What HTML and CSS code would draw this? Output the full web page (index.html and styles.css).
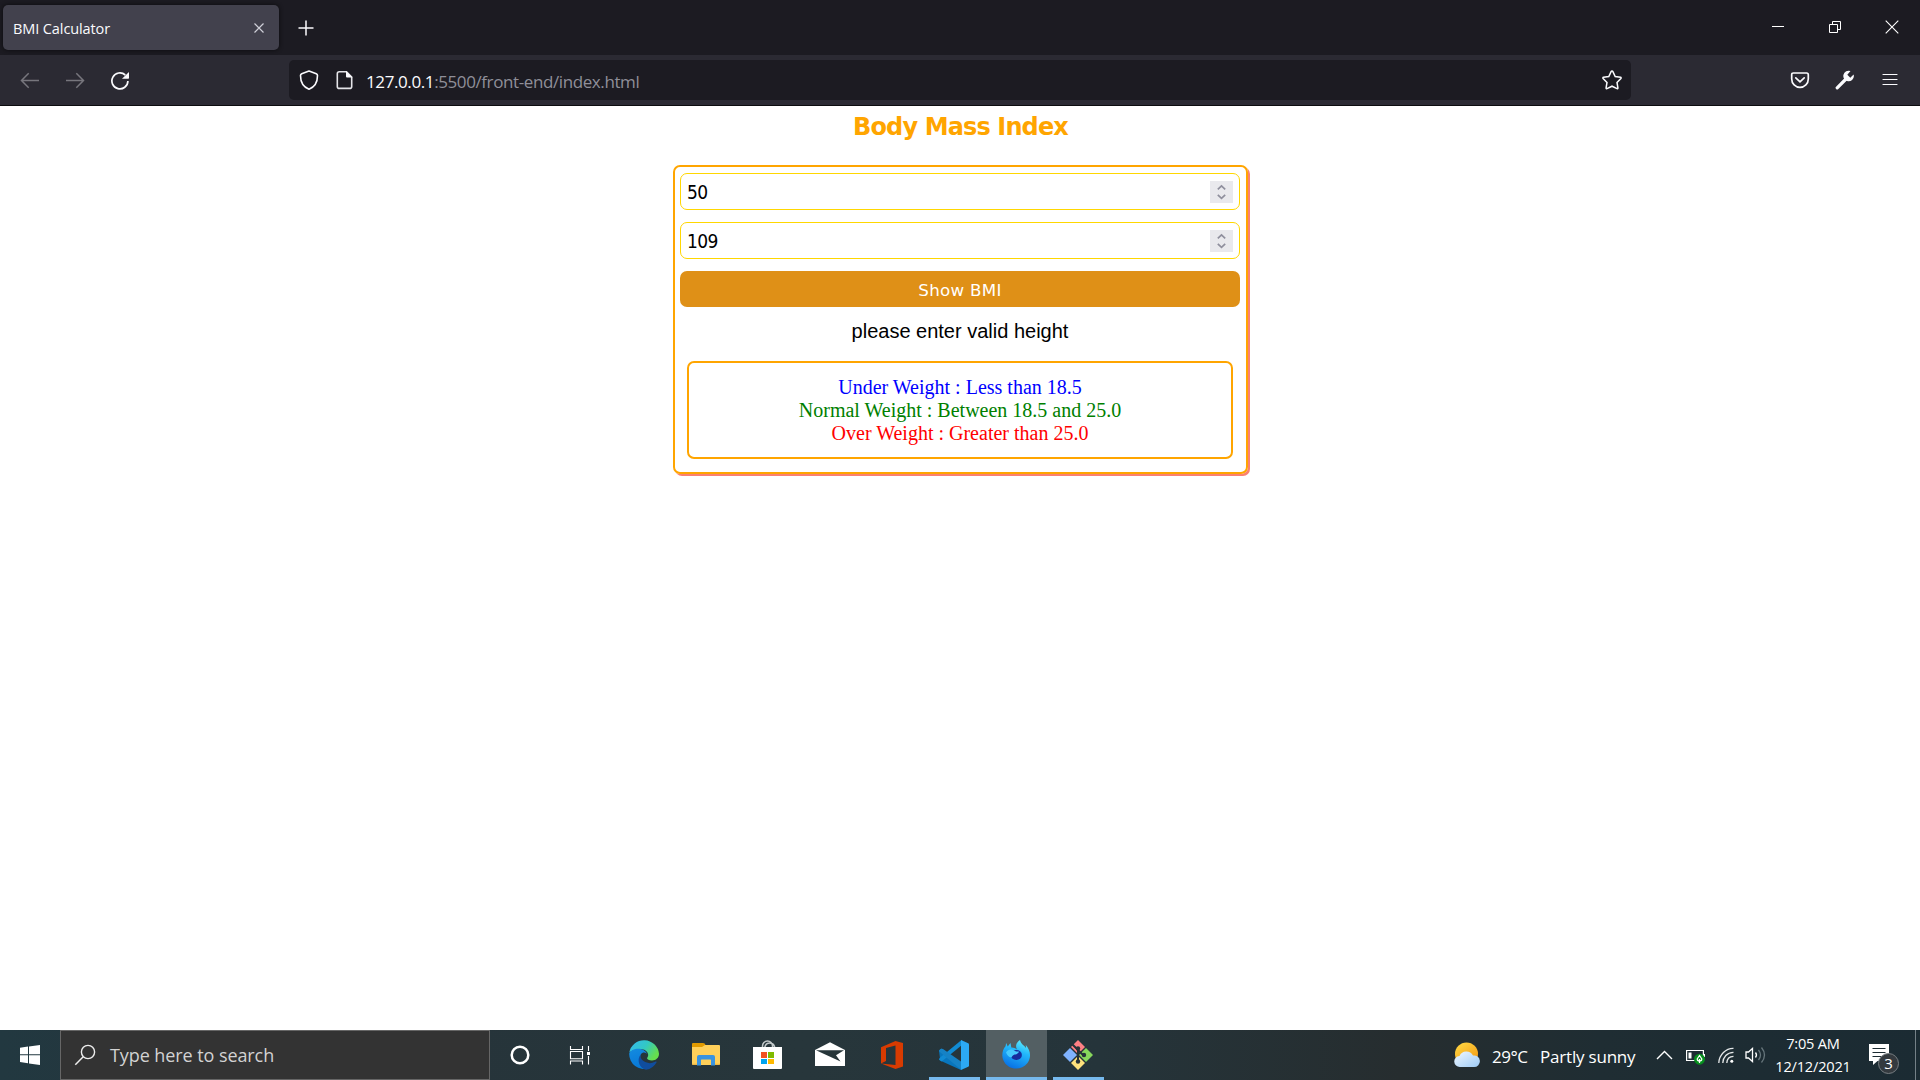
FILE: index.html
```html
<!DOCTYPE html>
<html lang="en">
<head>
<meta charset="utf-8">
<title>BMI Calculator</title>
<link rel="stylesheet" href="styles.css">
</head>
<body>
<div class="screen">
  <header class="tabbar">
    <div class="tab">
      <span class="tab-title">BMI Calculator</span>
      <svg class="tab-close" width="12" height="12" viewBox="0 0 12 12"><path d="M1.5 1.5l9 9M10.5 1.5l-9 9" stroke="#cfcfd8" stroke-width="1.2"/></svg>
    </div>
    <svg class="new-tab" width="16" height="16" viewBox="0 0 16 16"><path d="M8 .5v15M.5 8h15" stroke="#fbfbfe" stroke-width="1.5"/></svg>
    <div class="window-buttons">
      <svg width="14" height="14" viewBox="0 0 14 14"><path d="M1 6.5h12" stroke="#fff"/></svg>
      <svg width="14" height="14" viewBox="0 0 14 14" fill="none" stroke="#fff"><path d="M1.500 4.500h8v8h-8zM4.500 4.500v-3h8v8h-3"/></svg>
      <svg width="14" height="14" viewBox="0 0 14 14"><path d="M.7.7l12.600 12.600M13.300.7L.7 13.300" stroke="#fff" stroke-width="1.100"/></svg>
    </div>
  </header>

  <nav class="toolbar">
    <svg class="tool back" width="20" height="20" viewBox="0 0 20 20" fill="none" stroke="#77767d" stroke-width="1.500"><path d="M19 10.500H1.600M8.700 3.300L1.500 10.500l7.200 7.200"/></svg>
    <svg class="tool forward" width="20" height="20" viewBox="0 0 20 20" fill="none" stroke="#77767d" stroke-width="1.500"><path d="M1 10.500h17.400M11.300 3.300l7.200 7.200-7.200 7.200"/></svg>
    <svg class="tool" width="20" height="20" viewBox="0 0 20 20"><path d="M17.900 11A8 8 0 1 1 15.300 5" fill="none" stroke="#fbfbfe" stroke-width="1.700"/><path d="M19 2v6q0 .7-.7.7H12z" fill="#fbfbfe"/></svg>
    <div class="urlbar">
      <svg class="shield" width="20" height="22" viewBox="0 0 20 22"><path d="M10 2l7.300 2.700q1.200.5 1.200 1.800C18.500 13 15.700 18 10 20.200 4.300 18 1.500 13 1.500 6.500q0-1.300 1.200-1.800z" fill="none" stroke="#fbfbfe" stroke-width="1.600" stroke-linejoin="round"/></svg>
      <svg class="page" width="17" height="20" viewBox="0 0 17 20"><path d="M3.300 1.800h7.200l5.200 5.200v9.400q0 2-2 2H3.300q-2 0-2-2V3.800q0-2 2-2z" fill="none" stroke="#e4e4e8" stroke-width="1.600"/><path d="M10 1l6.500 6.500H11q-1 0-1-1z" fill="#fbfbfe"/></svg>
      <span class="url"><b>127.0.0.1</b>:5500/front-end/index.html</span>
      <svg class="star" width="22" height="22" viewBox="0 0 22 22"><path d="M11 2q.6 0 .9.600l2.300 5 5.300.700q1 .300.400 1.200l-3.900 3.900.9 5.500q0 1-.9.700L11 17.200l-5 2.400q-.9.300-.9-.7l.9-5.500-3.900-3.900q-.6-.9.400-1.200l5.300-.7 2.300-5q.3-.6.9-.6z" fill="none" stroke="#fbfbfe" stroke-width="1.500"/></svg>
    </div>
    <div class="tools-right">
      <svg width="20" height="20" viewBox="0 0 20 20" fill="none" stroke="#fbfbfe" stroke-width="1.700"><path d="M3.400 3h13.200q1.700 0 1.700 1.700V9a8.300 8.300 0 0 1-16.600 0V4.700Q1.700 3 3.400 3z"/><path d="M5.800 7.800L10 11.800l4.200-4" stroke-linecap="round"/></svg>
      <svg width="20" height="20" viewBox="0 0 20 20"><path d="M2.200 17.800L11 9" stroke="#fbfbfe" stroke-width="3.200" stroke-linecap="round"/><path d="M15.500 1.100a5.300 5.300 0 1 0 3.400 5l-.3-1.600-3.300 3.200-3-3z" fill="#fbfbfe"/></svg>
      <svg width="20" height="20" viewBox="0 0 20 20"><path d="M3 4.500h14M3 9.500h14M3 14.500h14" stroke="#fbfbfe" stroke-width="1.200" stroke-linecap="round"/></svg>
    </div>
  </nav>

  <main class="content">
    <h1 class="heading">Body Mass Index</h1>
    <section class="card">
      <div class="field"><span>50</span>
        <svg class="spinner" width="23" height="22" viewBox="0 0 23 22"><path fill="#e9e9ed" d="M0 0h23v22H0z"/><path d="M7.800 8.300L11.500 4.800l3.700 3.500M7.800 13.900l3.700 3.500 3.700-3.500" fill="none" stroke="#8f8f9d" stroke-width="1.700"/></svg>
      </div>
      <div class="field"><span>109</span>
        <svg class="spinner" width="23" height="22" viewBox="0 0 23 22"><path fill="#e9e9ed" d="M0 0h23v22H0z"/><path d="M7.800 8.300L11.500 4.800l3.700 3.500M7.800 13.900l3.700 3.500 3.700-3.500" fill="none" stroke="#8f8f9d" stroke-width="1.700"/></svg>
      </div>
      <button class="show">Show BMI</button>
      <p class="message">please enter valid height</p>
      <div class="legend">
        <div class="under">Under Weight : Less than 18.5</div>
        <div class="normal">Normal Weight : Between 18.5 and 25.0</div>
        <div class="over">Over Weight : Greater than 25.0</div>
      </div>
    </section>
  </main>

  <footer class="taskbar">
    <div class="start"><svg width="20" height="20" viewBox="0 0 20 20"><path d="M0 2.700L8 1.600v7.700H0zM9 1.500L20 0v9.300H9zM0 10.300h8v7.900L0 17.100zM9 10.300h11V20L9 18.400z" fill="#fff"/></svg></div>
    <div class="search">
      <svg width="22" height="22" viewBox="0 0 22 22"><circle cx="14" cy="8" r="6.600" fill="none" stroke="#eee" stroke-width="1.400"/><path d="M9.200 12.700L1.300 20.700" stroke="#eee" stroke-width="1.500"/></svg>
      <span class="search-text">Type here to search</span>
    </div>
    <div class="slot narrow"><svg width="22" height="22" viewBox="0 0 22 22"><circle cx="11" cy="11" r="8.300" fill="none" stroke="#fff" stroke-width="2.500"/></svg></div>
    <div class="slot narrow last"><svg width="22" height="22" viewBox="0 0 22 22" fill="none" stroke="#fff" stroke-width="1.100"><path d="M1.500 2v3.500h12V2M1.500 20.500V17h12v3.500M1.500 7.500h12v7.300h-12zM19.500 2v5M19.500 12v8.500"/><path d="M18 8h3v3h-3z" fill="#fff" stroke="none"/></svg></div>
    <div class="slot"><svg width="30" height="30" viewBox="0 0 30 30">
      <defs><linearGradient id="e1" x1="0" y1="0" x2="1" y2=".5"><stop offset="0" stop-color="#35b8f1"/><stop offset=".55" stop-color="#32c8c4"/><stop offset="1" stop-color="#66df4d"/></linearGradient><linearGradient id="e2" x1="0" y1="0" x2=".3" y2="1"><stop offset="0" stop-color="#148be0"/><stop offset="1" stop-color="#0878d6"/></linearGradient></defs>
      <path d="M.3 12.500A15 15 0 0 1 30 13.700c0 4-3 6.700-7 6.700-3.700 0-5.800-1.400-4.600-2.900 2.300-3.300-.7-8-5.700-8.200C7.500 8.800 3 10.500.3 12.500z" fill="url(#e1)"/>
      <path d="M.2 13.500C1.500 9.500 8 7.800 12.500 9.200c3.500 1.200 5.300 3.300 5.600 5-.8-2-4.600-2.800-6.300.3-2.500 5.500 2 12.500 8 13.800A15 15 0 0 1 .2 13.500z" fill="url(#e2)"/>
      <path d="M11.700 14.600c-1.500 5.400 5.700 9.800 11.800 8.200 2.500-.7 4.400-1.900 4.100-.6A15 15 0 0 1 17 29.800c-6-.6-10-9.700-5.300-15.200z" fill="#104d9e"/></svg></div>
    <div class="slot"><svg width="30" height="30" viewBox="0 0 30 30"><path d="M1 4q0-1 1-1h10q2 0 2.500 2v6H1z" fill="#e19a00"/><path d="M1 7h10l3-2h14q1 0 1 1v18q0 1-1 1H2q-1 0-1-1z" fill="#ffd05a"/><path d="M6 25.500V17q0-2 2-2h14q2 0 2 2v8.500h-4V20q0-.5-.5-.5h-9q-.5 0-.5.5v5.500z" fill="#3993e0"/><path d="M1 24.300h28" stroke="#e2a83a" stroke-width=".8" stroke-dasharray="5 18 6"/></svg></div>
    <div class="slot"><svg width="30" height="30" viewBox="0 0 30 30"><path d="M9.500 8V6a5 5 0 0 1 10 0v2M12 8V6.500a5 5 0 0 1 9.500 0V8" fill="none" stroke="#c3c9ca" stroke-width="1.500"/><path d="M0 7h29v21q0 1-1 1H1q-1 0-1-1z" fill="#fff"/><path d="M8 12h6v6H8z" fill="#f25022"/><path d="M15 12h6v6h-6z" fill="#7fba00"/><path d="M8 19h6v5H8z" fill="#00a4ef"/><path d="M15 19h6v5h-6z" fill="#ffb900"/></svg></div>
    <div class="slot"><svg width="30" height="30" viewBox="0 0 30 30"><path d="M0 10L15 2.300 30 10v16H0z" fill="#fff"/><path d="M1 10.200h28l-8 5 4.500 6.300L1 10.200z" fill="#263539"/></svg></div>
    <div class="slot"><svg width="30" height="30" viewBox="0 0 30 30"><path d="M4 7.200L18.500 1 26 3v23.500L18.500 29 4 23.500 18.500 25V5.600L9 8v13l-5 2.500z" fill="#d83b01"/></svg></div>
    <div class="slot running"><svg width="30" height="30" viewBox="0 0 30 30"><path d="M0 10.500l2.700-2 20 17.500-.7 4L1 20.500q-1.300-1 0-2z" fill="#0876bd"/><path d="M0 19.500l2.700 2L23 5l-.5-5L.6 18z" fill="#118bd3"/><path d="M2.500 8.700q-1 0-2 1.300-.6 1 .4 2L22 29.800V21.500L4 9z" fill="#1682c5"/><path d="M22 0l7.200 3.300q.8.400.8 1.500v20.400q0 1.100-.8 1.500L22 30z" fill="#2ca9f4"/></svg></div>
    <div class="slot active"><svg width="30" height="30" viewBox="0 0 30 30">
      <defs><linearGradient id="f1" x1=".8" y1="0" x2=".4" y2="1"><stop offset="0" stop-color="#66f0fa"/><stop offset=".4" stop-color="#24b9fb"/><stop offset="1" stop-color="#0872e6"/></linearGradient></defs>
      <circle cx="15" cy="15.500" r="13.300" fill="#535f63"/>
      <path d="M1.300 15.500c0-4 1.200-7 3.200-9.300L5.200 3l1.500 3.500L9.500 3l.8 4.500c3 .2 5 1 6 2.500C13.700 6.500 15.500 2 19 0c.8 4 4 5 6 8l-.2-3C30 10.500 30.200 18 26.500 23 20 31.500 6.500 30 2.500 20.500Q1.300 18 1.300 15.500z" fill="url(#f1)"/>
      <ellipse cx="15.300" cy="15" rx="5.600" ry="5" fill="#172d9e"/><path d="M5 12.500c2-3.500 6-3.800 9-1.500 1.500.8 2.800.6 4 .5-.5 2-2.500 2.800-4.500 3-2 .7-2.500 2.500-3.300 3-2.200 0-4-2.200-5.200-5z" fill="#47caff"/></svg></div>
    <div class="slot running"><svg width="30" height="30" viewBox="0 0 30 30"><path d="M15 0l7 7-7 7-7-7z" fill="#ff8084"/><path d="M7 8l7 7-7 7-7-7z" fill="#80b3ff"/><path d="M23 8l7 7-7 7-7-7z" fill="#87d65c"/><path d="M15 16l7 7-7 7-7-7z" fill="#ffe27d"/><path d="M9 4l6 6v13M15 10l6 6" fill="none" stroke="#263238" stroke-width="2"/><circle cx="15" cy="8.500" r="2.200" fill="#263238"/><circle cx="15" cy="21.500" r="2.200" fill="#263238"/><circle cx="21" cy="15" r="2.200" fill="#263238"/></svg></div>

    <div class="tray">
      <svg class="weather" width="26" height="26" viewBox="0 0 26 26"><defs><linearGradient id="s" x2=".7" y2="1"><stop stop-color="#ffda45"/><stop offset="1" stop-color="#f49a14"/></linearGradient><linearGradient id="c" x2="1" y2="1"><stop stop-color="#f1f8ff"/><stop offset="1" stop-color="#9dcbf6"/></linearGradient></defs><circle cx="12.500" cy="12" r="11.500" fill="url(#s)"/><path d="M6 25a5.500 5.500 0 0 1-.5-11A7.500 7.500 0 0 1 19 13.500 5.800 5.800 0 1 1 20 25z" fill="url(#c)"/></svg>
      <span class="temp">29°C</span><span class="sky">Partly sunny</span>
      <svg class="chevron" width="17" height="12" viewBox="0 0 17 12"><path d="M1 10l7.500-7.500L16 10" fill="none" stroke="#fff" stroke-width="1.400"/></svg>
      <svg class="battery" width="20" height="20" viewBox="0 0 20 20"><path d="M.6 5.500h16.800v10H.6z" fill="none" stroke="#fff" stroke-width="1.200"/><path d="M2.500 7.500h3v6h-3zM17.500 9H19v3h-1.500z" fill="#fff"/><circle cx="13.500" cy="14.200" r="5.500" fill="#078f1e"/><path d="M13.500 10.500l2.300 3.500q0 2-2.300 2t-2.300-2zM13.500 14v4" fill="none" stroke="#fff" stroke-width="1.200"/></svg>
      <svg class="wifi" width="17" height="17" viewBox="0 0 17 17" fill="none" stroke="#e4e7e8" stroke-width="1.300"><path d="M.8 16C1 8 8 1 15.500 1.300M4.800 16C5 10 9 5.500 15.500 5.300M8.800 16c.2-4 2.700-6.700 6.700-6.700"/><circle cx="13.800" cy="14.300" r="1.500" fill="#fff" stroke="none"/></svg>
      <svg class="sound" width="21" height="20" viewBox="0 0 21 20" fill="none" stroke="#fff" stroke-width="1.300"><path d="M1 7h2.500L7.500 3.500v13L3.500 13H1z"/><path d="M10.500 7.500q2 2.500 0 5"/><path d="M13.500 5q4 5 0 10M16.500 2.500q6 7.500 0 15" stroke="#66757b"/></svg>
      <div class="clock"><span>7:05 AM</span><span class="date">12/12/2021</span></div>
      <svg class="notice" width="30" height="32" viewBox="0 0 30 32"><path d="M0 1h20v17H8.500L4 22v-4H0z" fill="#fff"/><path d="M3.500 5.500h13M3.500 9.500h13M3.500 13.500h9" stroke="#1c2b32"/><circle cx="19.500" cy="20.500" r="10" fill="#343a3f" stroke="#777e82"/><text x="19.500" y="26" class="badge">3</text></svg>
      <i class="desktop-edge"></i>
    </div>
  </footer>
</div>
</body>
</html>
```
FILE: styles.css
```css
* { box-sizing: border-box; }
body { margin: 0; background: #fff; font-family: "Open Sans", sans-serif; }
svg { display: block; flex: none; }
.screen { width: 1920px; height: 1080px; display: flex; flex-direction: column; overflow: hidden; }

.tabbar { height: 55px; background: #1c1b22; display: flex; align-items: center; flex: none; }
.tab { width: 276px; height: 45px; margin-left: 3px; padding: 0 14px 0 10px; display: flex; align-items: center; justify-content: space-between; background: #42414d; border-radius: 5px; box-shadow: 0 0 4px #0b0b0e; color: #fbfbfe; }
.tab-title { font-size: 14.500px; letter-spacing: -.1px; padding-top: 1px; }
.new-tab { margin-left: 18.500px; }
.window-buttons { display: flex; gap: 43px; margin: 0 21px 0 auto; padding-bottom: 1px; }

.toolbar { height: 51px; background: #2b2a33; border-bottom: 1px solid #0c0c0f; display: flex; align-items: center; flex: none; padding-left: 20px; }
.tool { margin-right: 25px; }
.urlbar { width: 1342px; height: 40px; margin-left: 134px; background: #1c1b22; border-radius: 5px; display: flex; align-items: center; padding: 0 8px 0 10px; }
.page { margin-left: 16.500px; }
.url { margin-left: 13.500px; padding-top: 3px; font-size: 17px; letter-spacing: -.4px; color: #8f8f99; white-space: nowrap; }
.url b { font-weight: 400; color: #fbfbfe; }
.star { margin-left: auto; }
.tools-right { display: flex; gap: 25px; margin: 0 20px 0 auto; }

.content { flex: 1; display: flex; flex-direction: column; align-items: center; padding-left: 1px; }
.heading { margin: 6px 0 0; height: 53px; font: bold 24px/30px Verdana, "DejaVu Sans", sans-serif; letter-spacing: -.87px; color: orange; }
.card { width: 575px; height: 309px; border: 2px solid orange; border-radius: 7px; box-shadow: 2px 2px 0 salmon; padding: 6px 6px 0 5px; display: flex; flex-direction: column; }
.field { height: 37px; margin-bottom: 12px; border: 1px solid gold; border-radius: 7px; display: flex; align-items: center; justify-content: space-between; padding: 0 6px; font: 19px "DejaVu Sans Condensed", "DejaVu Sans", sans-serif; font-stretch: condensed; letter-spacing: -.6px; }
.field span { padding-top: 1px; }
.show { height: 36px; padding: 2px 0 0; border: 0; border-radius: 7px; background: #df9017; color: #fff; font: 16.700px Verdana, "DejaVu Sans", sans-serif; letter-spacing: .3px; }
.message { margin: 12px 0 0; text-align: center; font: 20px/24px "Liberation Sans", Arial, sans-serif; }
.legend { margin: 18px 7px 0; height: 98px; border: 2px solid orange; border-radius: 7px; padding-top: 13px; text-align: center; font: 20px/23px "Liberation Serif", "Times New Roman", serif; }
.under { color: blue; }
.normal { color: green; }
.over { color: red; }

.taskbar { height: 50px; flex: none; display: flex; background: linear-gradient(90deg, #223840 0, #26343a 450px, #27363b 800px, #25343a 1100px, #262d2f 1400px, #1f2d33 1600px, #1b2b33 1920px); color: #fff; }
.start { width: 60px; display: grid; place-items: center; }
.search { width: 430px; border: 1px solid #666; background: #333; display: flex; align-items: center; padding-left: 13px; }
.search-text { margin-left: 14px; font-size: 18px; letter-spacing: -.08px; color: #d2d2d2; white-space: nowrap; }
.slot { width: 62px; display: grid; place-items: center; }
.narrow { width: 60px; }
.last { margin-right: 3px; }
.running { background: linear-gradient(#76b9ed, #76b9ed) 6px 47px / 51px 3px no-repeat; }
.active { background: #535f63; border-bottom: 3px solid #76b9ed; padding: 2px 1px 0 0; margin-left: 1px; width: 61px; }
.tray { margin-left: auto; display: flex; align-items: center; width: 467px; font-size: 17px; white-space: nowrap; }
.weather { margin-left: 1px; }
.temp { width: 48px; margin-left: 12px; padding-top: 3px; letter-spacing: -.5px; }
.sky { width: 116px; padding-top: 3px; letter-spacing: -.2px; }
.battery { margin-left: 13px; }
.wifi { margin-left: 12px; }
.sound { margin-left: 10px; }
.clock { width: 94px; display: flex; flex-direction: column; align-items: center; font-size: 14.600px; line-height: 23px; letter-spacing: -.2px; }
.notice { margin: 8px 0 0 9px; }
.badge { font: 15px "Open Sans", sans-serif; fill: #fff; text-anchor: middle; }
.desktop-edge { width: 1px; height: 50px; background: #748087; margin-left: 16px; }
```
